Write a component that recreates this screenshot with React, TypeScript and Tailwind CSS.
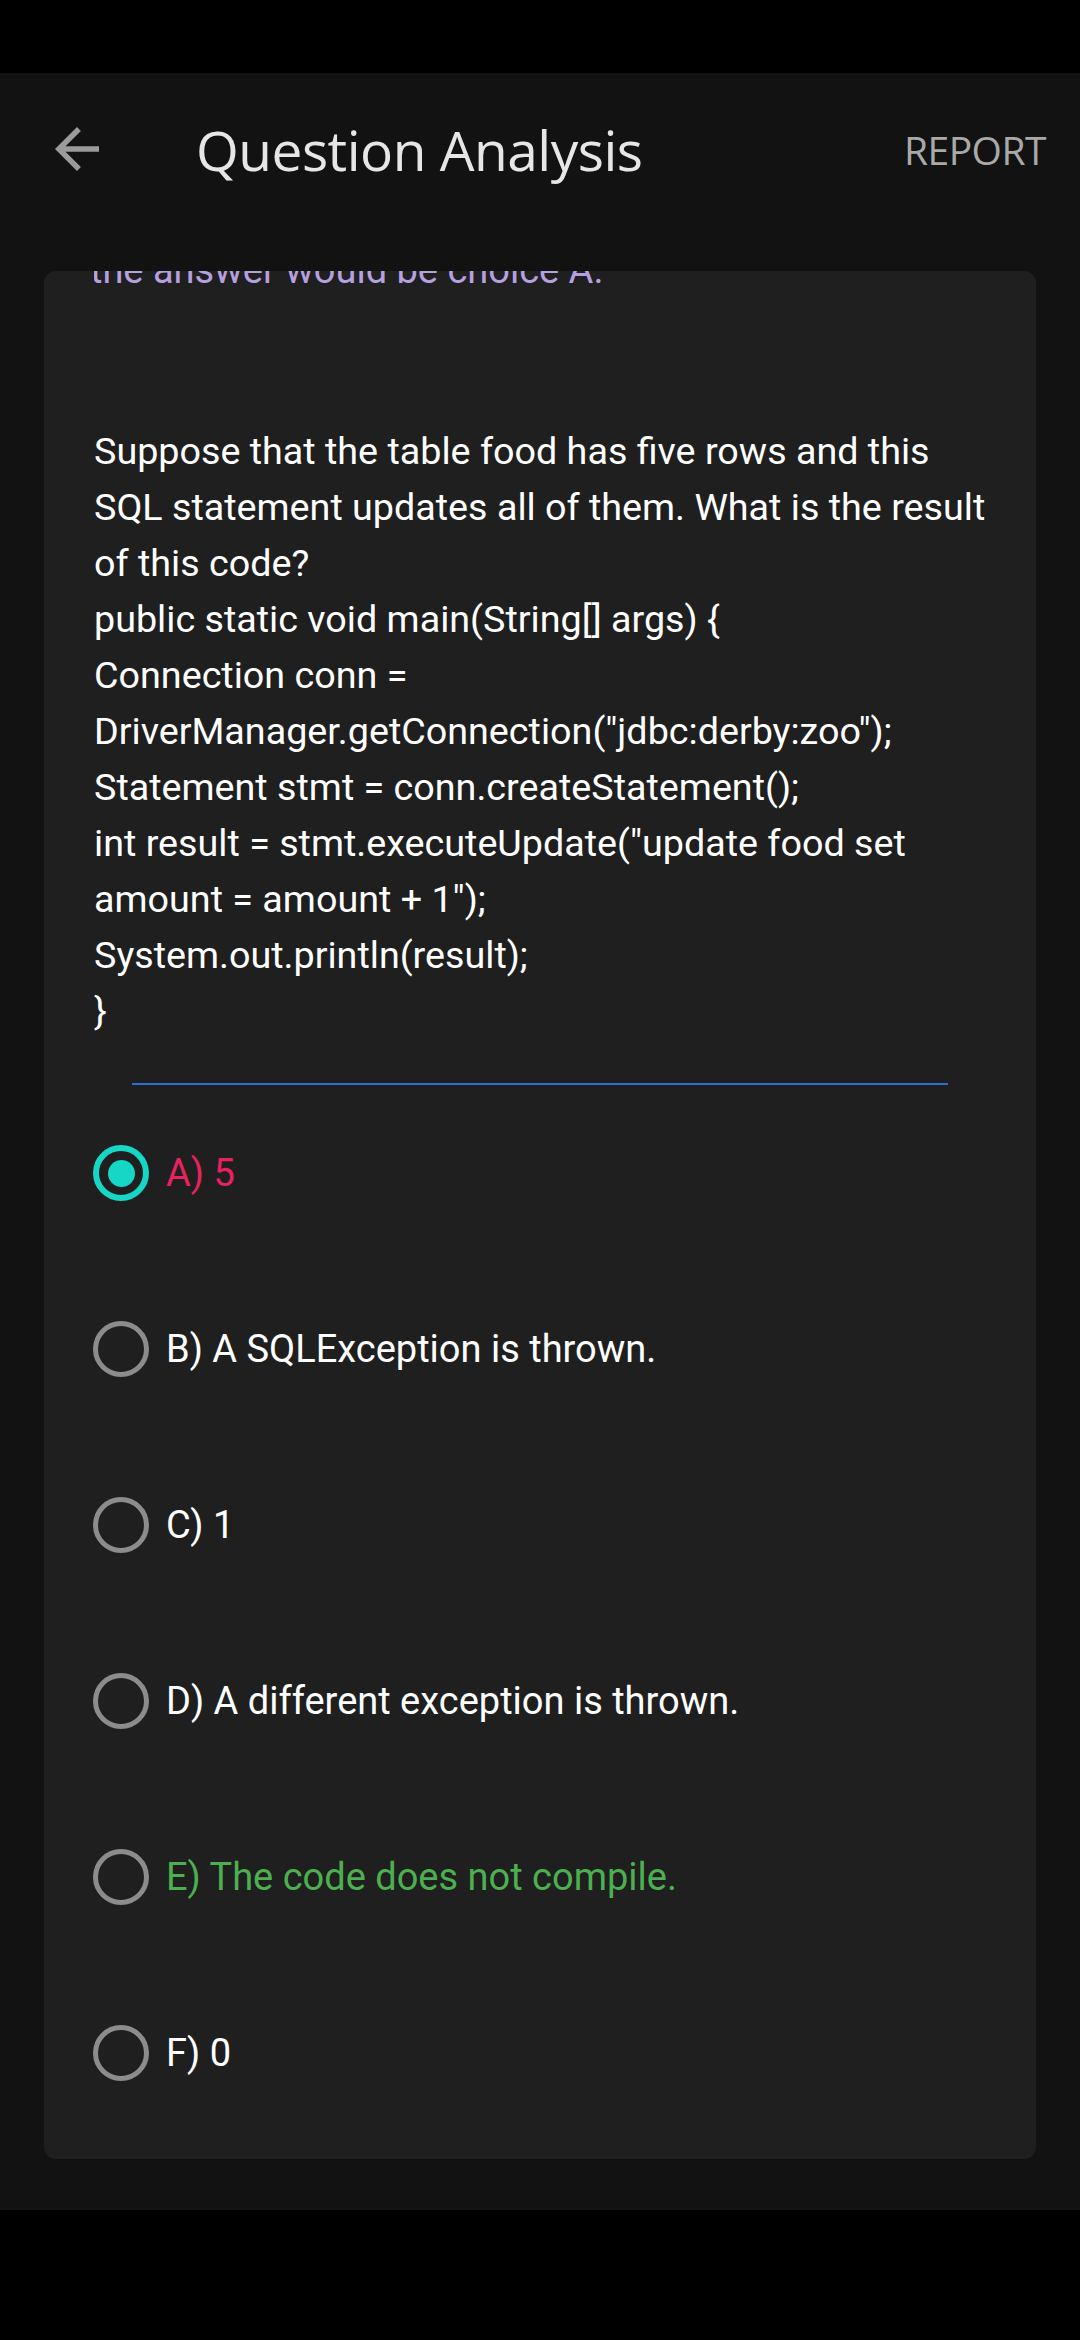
import React from "react";

const questionLines = [
  "Suppose that the table food has five rows and this",
  "SQL statement updates all of them. What is the result",
  "of this code?",
  "public static void main(String[] args) {",
  "Connection conn =",
  'DriverManager.getConnection("jdbc:derby:zoo");',
  "Statement stmt = conn.createStatement();",
  'int result = stmt.executeUpdate("update food set',
  'amount = amount + 1");',
  "System.out.println(result);",
  "}",
];

type Opt = { label: string; color: string; checked?: boolean };

const options: Opt[] = [
  { label: "A) 5", color: "text-[#e8215f]", checked: true },
  { label: "B) A SQLException is thrown.", color: "text-white" },
  { label: "C) 1", color: "text-white" },
  { label: "D) A different exception is thrown.", color: "text-white" },
  { label: "E) The code does not compile.", color: "text-[#4caf50]" },
  { label: "F) 0", color: "text-white" },
];

function Radio({ checked }: { checked?: boolean }) {
  if (checked) {
    return (
      <div className="w-[56px] h-[56px] rounded-full border-[6px] border-[#16d6c5] flex items-center justify-center shrink-0">
        <div className="w-[27px] h-[27px] rounded-full bg-[#16d6c5]" />
      </div>
    );
  }
  return <div className="w-[56px] h-[56px] rounded-full border-[5px] border-[#8c8c8c] shrink-0" />;
}

export default function App() {
  return (
    <div className="w-[1080px] h-[2340px] bg-black flex flex-col font-['Roboto',sans-serif] overflow-hidden">
      <div className="h-[73px] bg-black shrink-0" />
      <div className="flex-1 bg-[#121212] flex flex-col min-h-0">
        <div className="h-[198px] shrink-0">
          <div className="h-[152px] flex items-center pl-[44px] pr-[34px]">
            <svg width="66" height="66" viewBox="0 0 24 24" className="shrink-0">
              <path
                d="M20 11H7.83l5.59-5.59L12 4l-8 8 8 8 1.41-1.41L7.83 13H20v-2z"
                fill="#9b9b9b"
              />
            </svg>
            <div className="ml-[86px] text-[55px] text-[#e6e6e6] font-['Open_Sans',sans-serif] tracking-[-0.5px] leading-none">
              Question Analysis
            </div>
            <div className="ml-auto text-[39px] text-[#a9a9a9] font-['Open_Sans',sans-serif] tracking-[-0.5px] leading-none">
              REPORT
            </div>
          </div>
        </div>
        <div className="flex-1 min-h-0 px-[44px]">
          <div className="bg-[#1f1f1f] rounded-[12px] pl-[50px] pr-[30px] pb-[18px]">
            <div className="h-[17px] overflow-hidden flex flex-col justify-end">
              <div className="text-[38px] leading-[36px] text-[#b7a0e0] whitespace-nowrap -ml-[4px]">
                the answer would be choice A.
              </div>
            </div>
            <div className="mt-[135px] text-[37.7px] leading-[56px] text-white">
              {questionLines.map((l, i) => (
                <div key={i} className="whitespace-nowrap">
                  {l}
                </div>
              ))}
            </div>
            <div className="mt-[44px] ml-[38px] w-[816px] h-[2px] bg-[#2b6fd0]" />
            <div className="flex flex-col">
              {options.map((o, i) => (
                <div key={i} className="h-[176px] flex items-center -ml-[1px]">
                  <Radio checked={o.checked} />
                  <div className={`ml-[17px] text-[38px] leading-none ${o.color}`}>{o.label}</div>
                </div>
              ))}
            </div>
          </div>
        </div>
      </div>
      <div className="h-[130px] bg-black shrink-0" />
    </div>
  );
}
